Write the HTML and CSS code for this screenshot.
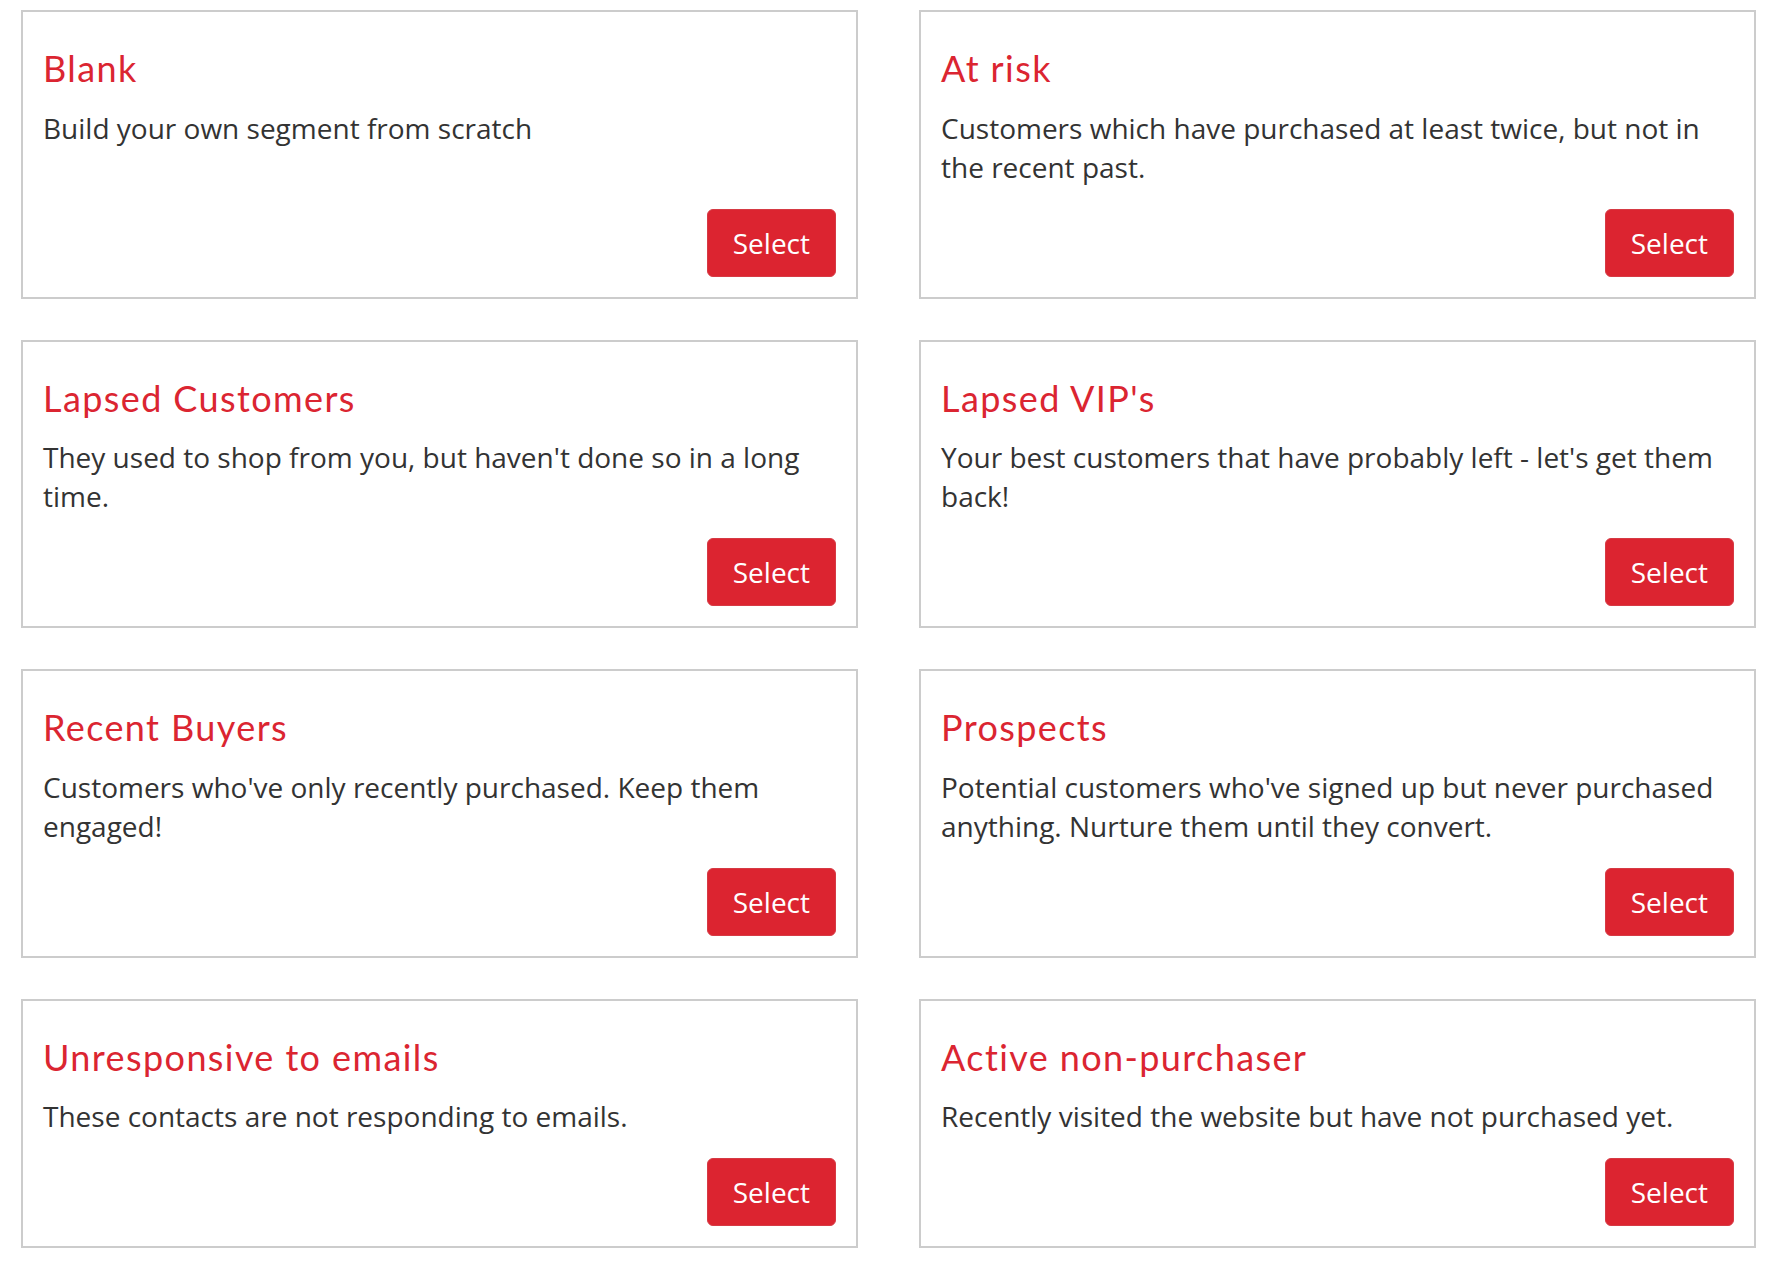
FILE: index.html
```html
<!DOCTYPE html>
<html lang="en">
<head>
<meta charset="utf-8">
<title>Segment templates</title>
<link rel="stylesheet" href="styles.css">
</head>
<body>
<main class="templates">
  <section class="card">
    <h3 class="card-title">Blank</h3>
    <p class="card-text">Build your own segment from scratch</p>
    <div class="card-actions"><button class="btn">Select</button></div>
  </section>
  <section class="card">
    <h3 class="card-title">At risk</h3>
    <p class="card-text">Customers which have purchased at least twice, but not in the recent past.</p>
    <div class="card-actions"><button class="btn">Select</button></div>
  </section>
  <section class="card">
    <h3 class="card-title">Lapsed Customers</h3>
    <p class="card-text">They used to shop from you, but haven't done so in a long time.</p>
    <div class="card-actions"><button class="btn">Select</button></div>
  </section>
  <section class="card">
    <h3 class="card-title">Lapsed VIP's</h3>
    <p class="card-text">Your best customers that have probably left - let's get them back!</p>
    <div class="card-actions"><button class="btn">Select</button></div>
  </section>
  <section class="card">
    <h3 class="card-title">Recent Buyers</h3>
    <p class="card-text">Customers who've only recently purchased. Keep them engaged!</p>
    <div class="card-actions"><button class="btn">Select</button></div>
  </section>
  <section class="card">
    <h3 class="card-title">Prospects</h3>
    <p class="card-text">Potential customers who've signed up but never purchased anything. Nurture them until they convert.</p>
    <div class="card-actions"><button class="btn">Select</button></div>
  </section>
  <section class="card">
    <h3 class="card-title">Unresponsive to emails</h3>
    <p class="card-text">These contacts are not responding to emails.</p>
    <div class="card-actions"><button class="btn">Select</button></div>
  </section>
  <section class="card">
    <h3 class="card-title">Active non-purchaser</h3>
    <p class="card-text">Recently visited the website but have not purchased yet.</p>
    <div class="card-actions"><button class="btn">Select</button></div>
  </section>
</main>
</body>
</html>
```

FILE: styles.css
```css
html, body {
  margin: 0;
  padding: 0;
  background: #ffffff;
}

body {
  font-family: "Open Sans", "Liberation Sans", sans-serif;
  color: #333333;
}

.templates {
  display: grid;
  grid-template-columns: 837px 837px;
  column-gap: 61px;
  row-gap: 41px;
  padding: 10px 21px 0 21px;
}

.card {
  display: flex;
  flex-direction: column;
  border: 2px solid #cccccc;
  padding: 20px 20px 20px 20px;
  background: #ffffff;
}

.card-title {
  margin: 17px 0 20px 0;
  font-family: Lato, "Open Sans", sans-serif;
  font-weight: 400;
  font-size: 36px;
  line-height: 1.1;
  letter-spacing: 1.4px;
  color: #db2531;
}

.card-text {
  margin: 0 0 22px 0;
  font-size: 28px;
  line-height: 39px;
  color: #333333;
}

.card-actions {
  margin-top: auto;
  display: flex;
  justify-content: flex-end;
}

.btn {
  font-family: "Open Sans", "Liberation Sans", sans-serif;
  font-size: 28px;
  line-height: 42px;
  padding: 12px 25px;
  border: 1px solid #d63a44;
  border-radius: 6px;
  background: #dc2430;
  color: #ffffff;
  cursor: pointer;
}
```
